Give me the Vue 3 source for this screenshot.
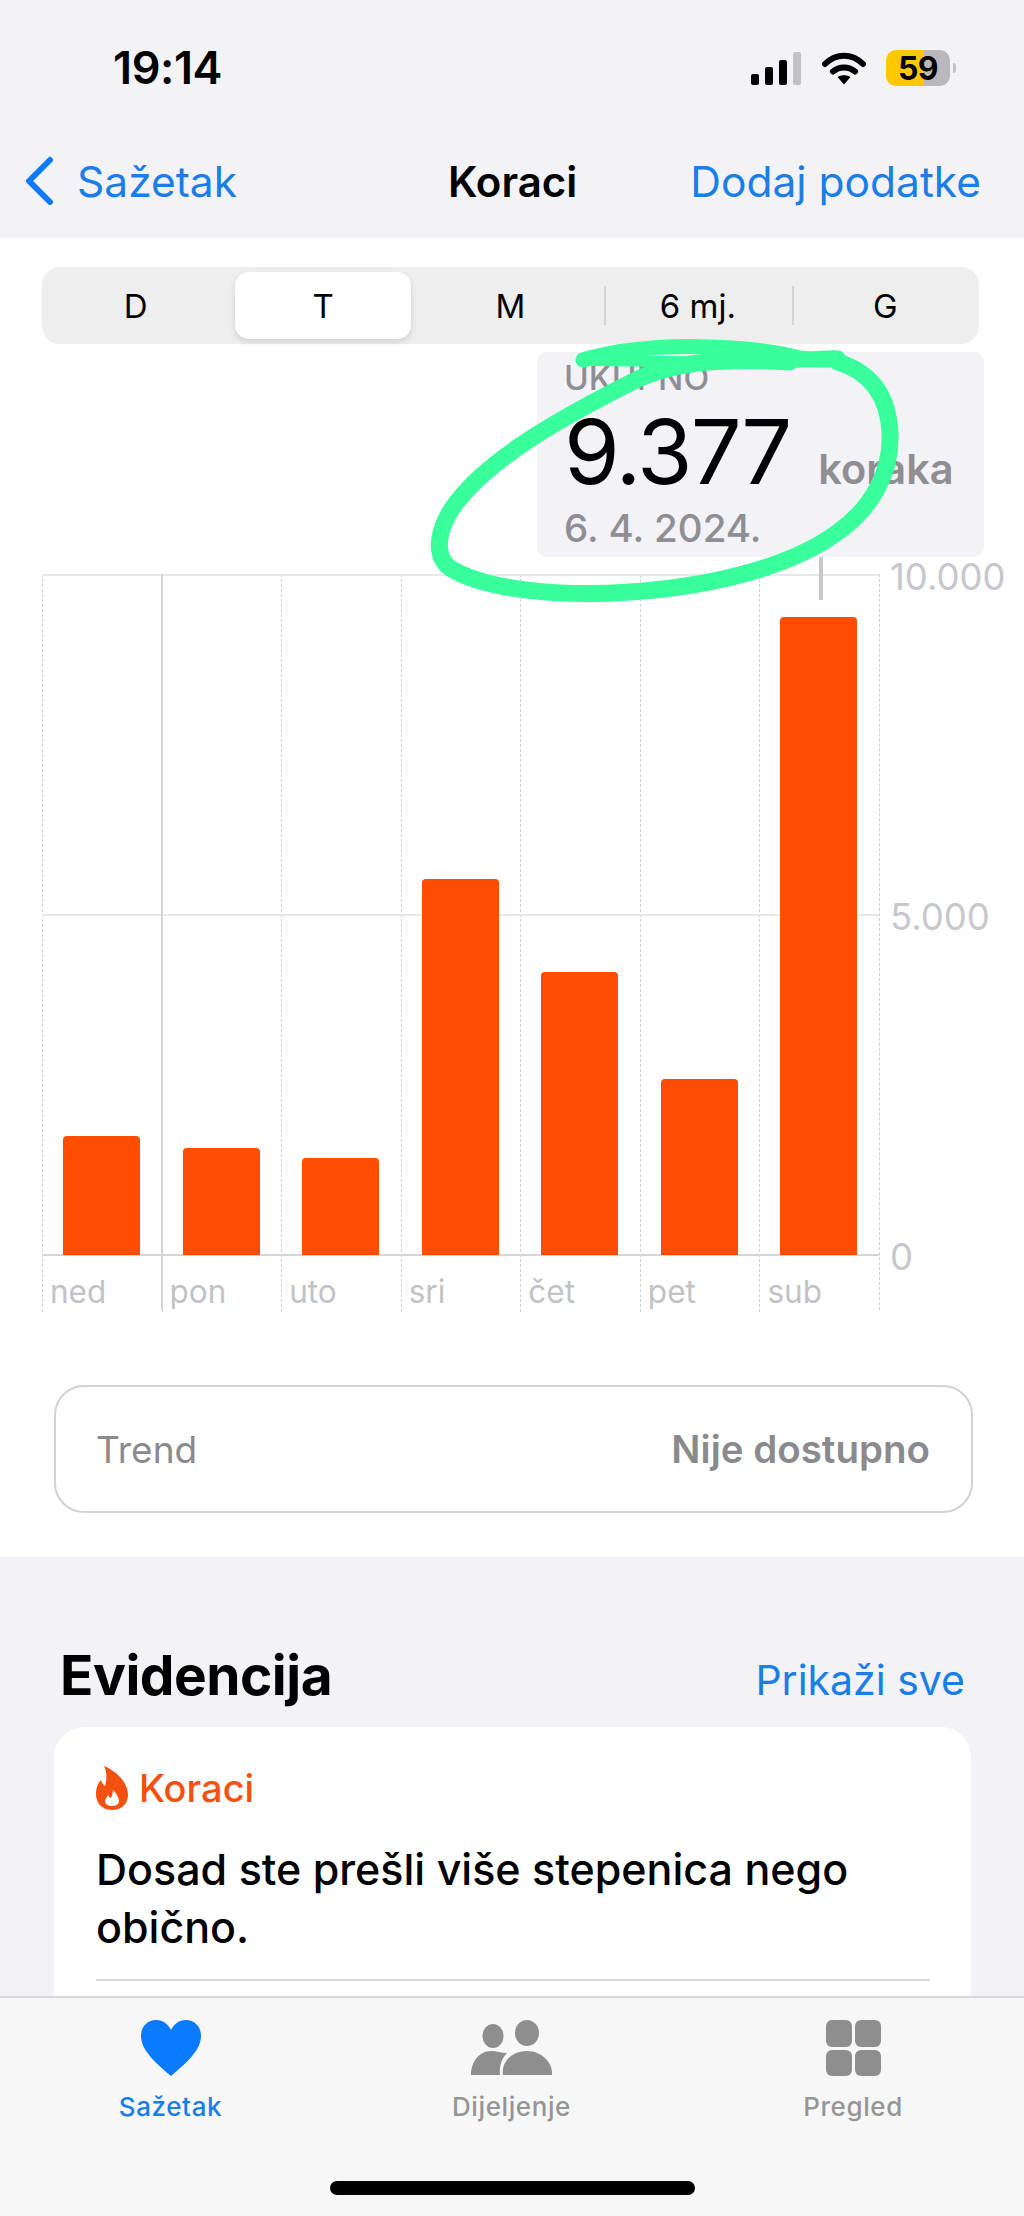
<script setup>
const tabs = ['D', 'T', 'M', '6 mj.', 'G']
const days = [
  { name: 'ned', height: 119 },
  { name: 'pon', height: 107 },
  { name: 'uto', height: 97 },
  { name: 'sri', height: 376 },
  { name: 'čet', height: 283 },
  { name: 'pet', height: 176 },
  { name: 'sub', height: 638 }
]
</script>

<template>
  <div class="screen">
    <header class="top">
      <div class="status">
        <span class="time">19:14</span>
        <div class="status-icons">
          <div class="signal">
            <i class="s1"></i><i class="s2"></i><i class="s3"></i><i class="s4"></i>
          </div>
          <svg class="wifi" width="44" height="33" viewBox="0 0 44 33">
            <path d="M3 12 C14 1 30 1 41 12" fill="none" stroke="#000" stroke-width="6" stroke-linecap="round" />
            <path d="M11 19.5 C17 14 27 14 33 19.5" fill="none" stroke="#000" stroke-width="6" stroke-linecap="round" />
            <path d="M15.5 25 C19 22.5 25 22.5 28.5 25 L22 32.5 Z" fill="#000" />
          </svg>
          <div class="battery"><span>59</span></div>
          <div class="nub"></div>
        </div>
      </div>
      <nav class="nav">
        <div class="back">
          <svg width="30" height="50" viewBox="0 0 30 50">
            <path d="M26 4 L5 25 L26 46" fill="none" stroke="#0a7aff" stroke-width="6" stroke-linecap="round" stroke-linejoin="round" />
          </svg>
          <span>Sažetak</span>
        </div>
        <span class="nav-title">Koraci</span>
        <span class="nav-action">Dodaj podatke</span>
      </nav>
    </header>

    <main class="panel">
      <div class="segments">
        <div v-for="(tab, i) in tabs" :key="tab" class="segment" :class="{ active: i === 1, rule: i > 2 }">{{ tab }}</div>
      </div>

      <div class="summary">
        <div class="summary-label">UKUPNO</div>
        <div class="summary-value"><strong>9.377</strong><span>koraka</span></div>
        <div class="summary-date">6. 4. 2024.</div>
      </div>

      <div class="chart">
        <div class="plot">
          <div v-for="day in days" :key="day.name" class="col">
            <div class="bar-area">
              <div class="bar" :style="{ height: day.height + 'px' }"></div>
            </div>
            <div class="day">{{ day.name }}</div>
          </div>
          <div class="hline h-top"></div>
          <div class="hline h-mid"></div>
          <div class="hline h-base"></div>
          <div class="solid-line"></div>
          <div class="pointer"></div>
        </div>
        <div class="yaxis">
          <span>10.000</span>
          <span>5.000</span>
          <span>0</span>
        </div>
      </div>

      <div class="trend">
        <span>Trend</span>
        <strong>Nije dostupno</strong>
      </div>
    </main>

    <section class="records">
      <div class="records-head">
        <h2>Evidencija</h2>
        <span>Prikaži sve</span>
      </div>
      <article class="card">
        <div class="card-label">
          <svg width="32" height="44" viewBox="0 0 32 44">
            <path d="M8 0 C18 4 32 15 32 29 C32 38 25 44 16 44 C7 44 0 38 0 28 C0 22 2 17 5 14 C6 17 7 19 9 20 C11 14 11 6 8 0 Z" fill="#f5500f" />
            <path d="M17 24 C21 28 23 32 23 35 C23 38 20 40 16 40 C12 40 9 38 9 35 C9 33 11 31 12 29 C13 31 14 32 15 32 C16 29 17 27 17 24 Z" fill="#fff" />
          </svg>
          <span>Koraci</span>
        </div>
        <p>Dosad ste prešli više stepenica nego obično.</p>
        <div class="card-rule"></div>
      </article>
    </section>

    <footer class="tabbar">
      <div class="tab tab-active">
        <svg width="60" height="56" viewBox="0 0 60 56">
          <path d="M30 56 C12 41 0 29 0 16 C0 6 7 0 15 0 C22 0 27 4 30 10 C33 4 38 0 45 0 C53 0 60 6 60 16 C60 29 48 41 30 56 Z" fill="#0a7aff" />
        </svg>
        <span>Sažetak</span>
      </div>
      <div class="tab">
        <svg width="82" height="56" viewBox="0 0 82 56">
          <ellipse cx="22" cy="16" rx="10.5" ry="12" fill="#8e8e8e" />
          <ellipse cx="56" cy="13" rx="12" ry="13" fill="#8e8e8e" />
          <path d="M0 55 C0 42 8 31 20 31 C26 31 30 33 36 33 C31 38 28 46 29 55 Z" fill="#8e8e8e" />
          <path d="M32 55 C30 42 41 31 56 31 C71 31 82 43 81 55 Z" fill="#8e8e8e" />
        </svg>
        <span>Dijeljenje</span>
      </div>
      <div class="tab">
        <div class="grid-icon"><i></i><i></i><i></i><i></i></div>
        <span>Pregled</span>
      </div>
      <div class="home"></div>
    </footer>

    <svg class="scribble" width="1024" height="700" viewBox="0 0 1024 700">
      <path d="M583 360 C650 340 750 345 800 358 C815 360 825 357 838 358" fill="none" stroke="#38ff9b" stroke-width="15" stroke-linecap="round" />
      <path d="M583 360 C650 362 760 362 838 362" fill="none" stroke="#38ff9b" stroke-width="11" stroke-linecap="round" />
      <path d="M838 362 C870 372 888 395 890 432 C892 472 872 508 838 532 C795 564 720 586 630 592 C560 597 485 590 450 568 C434 556 436 530 456 503 C490 458 560 418 640 378 C670 365 710 357 790 362" fill="none" stroke="#38ff9b" stroke-width="17" stroke-linecap="round" />
    </svg>
  </div>
</template>

<style>
html, body { margin: 0; padding: 0; background: #f2f2f7; }
</style>

<style scoped>
.screen {
  position: relative;
  width: 1024px;
  height: 2216px;
  overflow: hidden;
  background: #f2f2f7;
  font-family: Inter, "Liberation Sans", sans-serif;
  color: #000;
}
.top { height: 238px; box-sizing: border-box; }
.status {
  height: 136px;
  display: flex;
  justify-content: space-between;
  align-items: flex-start;
  padding: 47px 68px 0 113px;
  box-sizing: border-box;
}
.time { font-size: 45px; font-weight: 600; line-height: 42px; letter-spacing: -0.4px; }
.status-icons { display: flex; align-items: flex-start; margin-top: 3px; }
.signal { display: flex; align-items: flex-end; gap: 6px; width: 51px; height: 33px; margin-top: 2px; }
.signal i { width: 8px; background: #000; border-radius: 2px; display: block; }
.s1 { height: 11px; }
.s2 { height: 18px; }
.s3 { height: 25px; }
.signal .s4 { height: 33px; background: #c2c2c6; }
.wifi { margin: 2px 0 0 20px; }
.battery {
  width: 64px;
  height: 36px;
  margin-left: 20px;
  border-radius: 10px;
  background: linear-gradient(90deg, #fdc800 0 59%, #b9b9bd 59% 100%);
  display: flex;
  align-items: center;
  justify-content: center;
  font-size: 32px;
  font-weight: 700;
  letter-spacing: -0.5px;
}
.nub { width: 3px; height: 10px; background: #c2c2c6; border-radius: 0 3px 3px 0; margin: 13px 0 0 3px; }
.nav {
  height: 102px;
  display: flex;
  align-items: center;
  justify-content: space-between;
  padding: 0 43px 12px 24px;
  box-sizing: border-box;
  font-size: 42.5px;
  color: #1b7ee6;
  position: relative;
}
.back { display: flex; align-items: center; gap: 23px; }
.nav-title {
  position: absolute;
  left: 448px;
  color: #000;
  font-weight: 600;
  font-size: 42px;
}
.panel {
  height: 1319px;
  background: #fff;
  padding: 29px 0 0 42px;
  box-sizing: border-box;
}
.segments {
  height: 77px;
  border-radius: 18px;
  background: #eeeeef;
  display: grid;
  grid-template-columns: repeat(5, 1fr);
  padding: 5px 0;
  box-sizing: border-box;
  width: 937px;
}
.segment {
  position: relative;
  display: flex;
  align-items: center;
  justify-content: center;
  font-size: 33px;
  border-radius: 14px;
}
.segment.active { background: #fff; box-shadow: 0 3px 6px rgba(0,0,0,.12); margin: 0 6px; }
.segment.rule::before {
  content: "";
  position: absolute;
  left: 0;
  top: 14px;
  bottom: 14px;
  width: 2px;
  background: #d4d4d6;
}
.summary {
  width: 447px;
  height: 205px;
  margin: 8px 0 0 495px;
  background: #f2f2f7;
  border-radius: 10px;
  padding: 7px 0 0 27px;
  box-sizing: border-box;
  color: #8e8e93;
}
.summary-label { font-size: 33.5px; font-weight: 500; line-height: 38px; }
.summary-value { display: flex; align-items: baseline; height: 100px; line-height: 110px; }
.summary-value strong { color: #000; font-size: 90px; font-weight: 400; letter-spacing: -2px; }
.summary-value span { font-size: 41.5px; font-weight: 600; margin-left: 28px; }
.summary-date { font-size: 38.5px; font-weight: 500; line-height: 46px; margin-top: 8px; }
.chart { display: flex; margin-top: 17px; }
.plot {
  position: relative;
  flex: none;
  width: 838px;
  height: 736px;
  display: grid;
  grid-template-columns: repeat(7, 1fr);
  border-right: 1.5px dashed #d0d0d2;
  box-sizing: border-box;
}
.col { border-left: 1.5px dashed #d0d0d2; min-width: 0; }
.bar-area { height: 681px; display: flex; align-items: flex-end; padding-left: 20px; position: relative; z-index: 1; }
.bar { width: 77px; background: #fe4c00; border-radius: 4px 4px 0 0; }
.day { font-size: 31.5px; color: #c2c2c6; line-height: 40px; padding: 17px 0 0 7px; }
.hline { position: absolute; left: 0; right: 0; height: 2px; background: #e9e9eb; }
.h-top { top: 0; }
.h-mid { top: 340px; }
.h-base { top: 680px; background: #d5d5d8; }
.solid-line { position: absolute; left: 119px; top: 0; height: 736px; width: 1.5px; background: #d5d5d8; }
.pointer { position: absolute; left: 777px; top: -17px; width: 4px; height: 43px; background: #c7c7cc; z-index: 2; }
.yaxis {
  flex: none;
  height: 720px;
  margin: -17px 0 0 10px;
  display: flex;
  flex-direction: column;
  justify-content: space-between;
  font-size: 36.5px;
  line-height: 40px;
  color: #c7c7cc;
}
.trend {
  width: 919px;
  height: 128px;
  margin: 75px 0 0 12px;
  padding: 0 41px 0 40px;
  border: 2.5px solid #d1d1d6;
  border-radius: 30px;
  box-sizing: border-box;
  display: flex;
  align-items: center;
  justify-content: space-between;
  font-size: 37px;
  color: #8a8a8e;
}
.trend strong { font-weight: 600; font-size: 38.5px; }
.records { padding: 0 53px 0 54px; }
.records-head {
  height: 170px;
  display: flex;
  align-items: baseline;
  justify-content: space-between;
  padding: 86px 6px 0;
  box-sizing: border-box;
}
.records-head h2 { margin: 0; font-size: 55px; font-weight: 700; line-height: 64px; letter-spacing: -0.5px; }
.records-head span { font-size: 41px; color: #1b7ee6; }
.card { background: #fff; border-radius: 30px 30px 0 0; padding: 38px 41px 0 42px; height: 300px; }
.card-label { display: flex; align-items: center; gap: 11px; color: #f5500f; font-size: 38px; font-weight: 500; }
.card p { margin: 29px 0 0; font-size: 43px; font-weight: 500; line-height: 58px; }
.card-rule { height: 2px; background: #dcdcde; margin-top: 23px; }
.tabbar {
  position: absolute;
  left: 0;
  right: 0;
  bottom: 0;
  height: 220px;
  background: #f7f7f7;
  border-top: 2px solid #d8d8da;
  box-sizing: border-box;
  display: grid;
  grid-template-columns: 341px 341px 342px;
  padding-top: 22px;
}
.tab {
  display: flex;
  flex-direction: column;
  align-items: center;
  gap: 15px;
  font-size: 26px;
  font-weight: 500;
  color: #959595;
}
.tab span { letter-spacing: .6px; line-height: 32px; }
.tab-active { color: #1b7ee6; }
.tab svg { display: block; }
.grid-icon { width: 55px; height: 56px; display: grid; grid-template-columns: 1fr 1fr; gap: 3px; }
.grid-icon i { background: #8e8e8e; border-radius: 6px; display: block; }
.home {
  position: absolute;
  left: 330px;
  bottom: 21px;
  width: 365px;
  height: 14px;
  border-radius: 7px;
  background: #000;
}
.scribble { position: absolute; left: 0; top: 0; pointer-events: none; }
</style>
